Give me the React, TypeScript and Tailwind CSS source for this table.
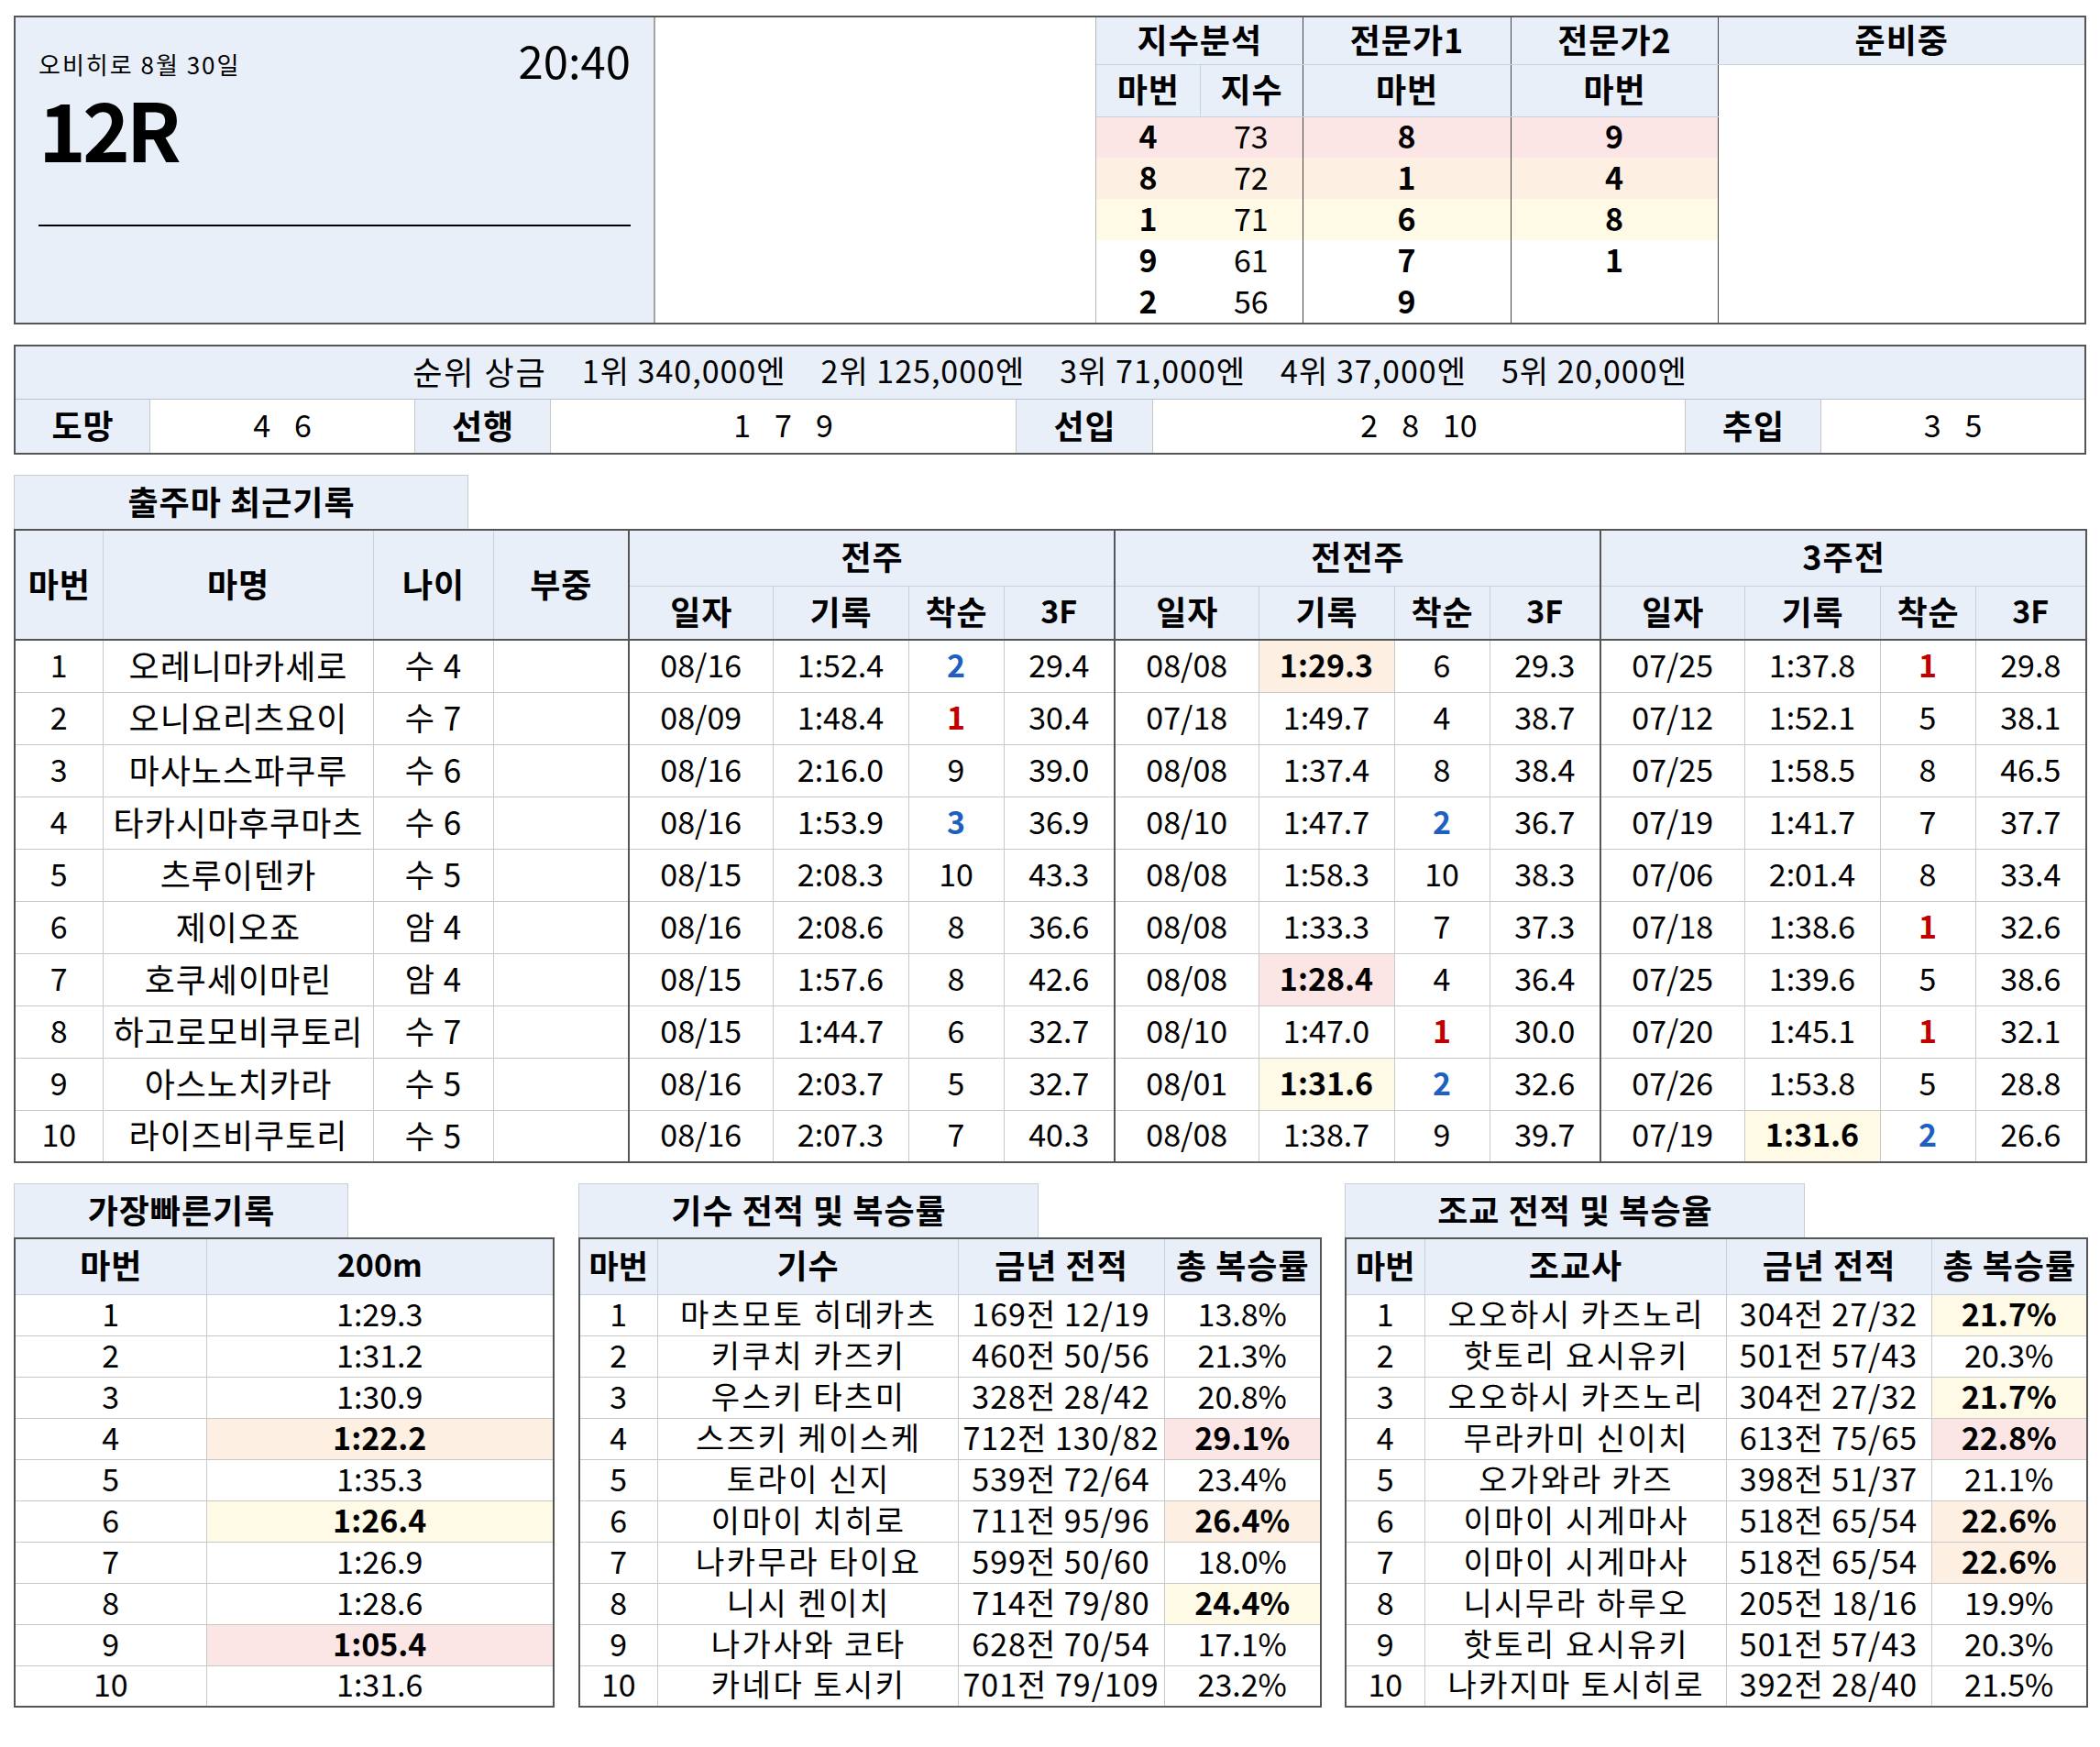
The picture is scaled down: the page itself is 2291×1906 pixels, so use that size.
import React from "react";

type HL = "" | "p" | "o" | "y";
type G = [string, string, string, string, HL?];

const hlCls: Record<string, string> = {
  "": "",
  p: "bg-[#fce5e5] font-bold",
  o: "bg-[#fdf0e2] font-bold",
  y: "bg-[#fefae6] font-bold",
};

const rankCls = (r: string) =>
  r === "1" ? "text-[#c00000] font-bold" : r === "2" || r === "3" ? "text-[#1f5fbf] font-bold" : "";

const horses: { no: string; name: string; age: string; g: G[] }[] = [
  { no: "1", name: "오레니마카세로", age: "수 4", g: [["08/16", "1:52.4", "2", "29.4"], ["08/08", "1:29.3", "6", "29.3", "o"], ["07/25", "1:37.8", "1", "29.8"]] },
  { no: "2", name: "오니요리츠요이", age: "수 7", g: [["08/09", "1:48.4", "1", "30.4"], ["07/18", "1:49.7", "4", "38.7"], ["07/12", "1:52.1", "5", "38.1"]] },
  { no: "3", name: "마사노스파쿠루", age: "수 6", g: [["08/16", "2:16.0", "9", "39.0"], ["08/08", "1:37.4", "8", "38.4"], ["07/25", "1:58.5", "8", "46.5"]] },
  { no: "4", name: "타카시마후쿠마츠", age: "수 6", g: [["08/16", "1:53.9", "3", "36.9"], ["08/10", "1:47.7", "2", "36.7"], ["07/19", "1:41.7", "7", "37.7"]] },
  { no: "5", name: "츠루이텐카", age: "수 5", g: [["08/15", "2:08.3", "10", "43.3"], ["08/08", "1:58.3", "10", "38.3"], ["07/06", "2:01.4", "8", "33.4"]] },
  { no: "6", name: "제이오죠", age: "암 4", g: [["08/16", "2:08.6", "8", "36.6"], ["08/08", "1:33.3", "7", "37.3"], ["07/18", "1:38.6", "1", "32.6"]] },
  { no: "7", name: "호쿠세이마린", age: "암 4", g: [["08/15", "1:57.6", "8", "42.6"], ["08/08", "1:28.4", "4", "36.4", "p"], ["07/25", "1:39.6", "5", "38.6"]] },
  { no: "8", name: "하고로모비쿠토리", age: "수 7", g: [["08/15", "1:44.7", "6", "32.7"], ["08/10", "1:47.0", "1", "30.0"], ["07/20", "1:45.1", "1", "32.1"]] },
  { no: "9", name: "아스노치카라", age: "수 5", g: [["08/16", "2:03.7", "5", "32.7"], ["08/01", "1:31.6", "2", "32.6", "y"], ["07/26", "1:53.8", "5", "28.8"]] },
  { no: "10", name: "라이즈비쿠토리", age: "수 5", g: [["08/16", "2:07.3", "7", "40.3"], ["08/08", "1:38.7", "9", "39.7"], ["07/19", "1:31.6", "2", "26.6", "y"]] },
];

const fastest: [string, HL][] = [
  ["1:29.3", ""], ["1:31.2", ""], ["1:30.9", ""], ["1:22.2", "o"], ["1:35.3", ""],
  ["1:26.4", "y"], ["1:26.9", ""], ["1:28.6", ""], ["1:05.4", "p"], ["1:31.6", ""],
];

const jockeys: [string, string, string, HL][] = [
  ["마츠모토 히데카츠", "169전 12/19", "13.8%", ""],
  ["키쿠치 카즈키", "460전 50/56", "21.3%", ""],
  ["우스키 타츠미", "328전 28/42", "20.8%", ""],
  ["스즈키 케이스케", "712전 130/82", "29.1%", "p"],
  ["토라이 신지", "539전 72/64", "23.4%", ""],
  ["이마이 치히로", "711전 95/96", "26.4%", "o"],
  ["나카무라 타이요", "599전 50/60", "18.0%", ""],
  ["니시 켄이치", "714전 79/80", "24.4%", "y"],
  ["나가사와 코타", "628전 70/54", "17.1%", ""],
  ["카네다 토시키", "701전 79/109", "23.2%", ""],
];

const trainers: [string, string, string, HL][] = [
  ["오오하시 카즈노리", "304전 27/32", "21.7%", "y"],
  ["핫토리 요시유키", "501전 57/43", "20.3%", ""],
  ["오오하시 카즈노리", "304전 27/32", "21.7%", "y"],
  ["무라카미 신이치", "613전 75/65", "22.8%", "p"],
  ["오가와라 카즈", "398전 51/37", "21.1%", ""],
  ["이마이 시게마사", "518전 65/54", "22.6%", "o"],
  ["이마이 시게마사", "518전 65/54", "22.6%", "o"],
  ["니시무라 하루오", "205전 18/16", "19.9%", ""],
  ["핫토리 요시유키", "501전 57/43", "20.3%", ""],
  ["나카지마 토시히로", "392전 28/40", "21.5%", ""],
];

const KO = " text-[36px] tracking-[1px] indent-[1px]";
const KOS = " text-[34px] tracking-[2.5px] indent-[2.5px]";
const NUM = " text-[34px]";
const MIX = " text-[34px] tracking-[1px]";
const TH = "border border-[#c5d2e3] bg-[#e9eff8] font-bold leading-none p-0 pb-[5px] text-center whitespace-nowrap";
const TD = "border border-[#c8c8c8] leading-none p-0 pb-[4px] text-center whitespace-nowrap";
const DARKL = " border-l-2 border-l-[#555]";
const TOPH = "bg-[#e9eff8] border-b border-b-[#c5d2e3] text-center font-bold text-[36px] leading-none p-0 pb-[5px] tracking-[1px] indent-[1px]";
const TOPD = "text-center text-[34px] leading-none p-0 pb-[4px]";

function Tab({ w, title }: { w: string; title: string }) {
  return (
    <div className={`${w} h-[59px] border border-b-0 border-[#c8ccd3] bg-[#e9eff8] flex items-center justify-center pb-[4px] pl-[1px] font-bold text-[36px] leading-none tracking-[1px]`}>
      {title}
    </div>
  );
}

function Nums({ vals }: { vals: string[] }) {
  return (
    <div className="flex items-center justify-center gap-[26px] text-[34px] leading-none pb-[4px]">
      {vals.map((v, i) => (
        <span key={i}>{v}</span>
      ))}
    </div>
  );
}

const LBL = "shrink-0 bg-[#e9eff8] border-r border-r-[#c8c8c8] flex items-center justify-center pb-[4px] pl-[1px] font-bold text-[36px] leading-none tracking-[1px]";

export default function App() {
  const top: [string, string, string, string][] = [
    ["4", "73", "8", "9"],
    ["8", "72", "1", "4"],
    ["1", "71", "6", "8"],
    ["9", "61", "7", "1"],
    ["2", "56", "9", ""],
  ];
  const topBg = ["bg-[#fce5e5]", "bg-[#fdf0e2]", "bg-[#fefae6]", "", ""];

  return (
    <div className="bg-white w-[2291px] min-h-[1906px] pl-[15px] pt-[17px] text-black font-['Noto_Sans_CJK_KR','Noto_Sans',sans-serif]">
      {/* Top box */}
      <div className="flex w-[2261px] h-[337px] border-2 border-[#555]">
        <div className="w-[698px] shrink-0 border-r-2 border-r-[#a3a3a3] bg-[#e9eff8] px-[25px] pt-[21px] flex flex-col">
          <div className="flex justify-between items-start">
            <span className="mt-[17px] text-[26px] leading-none tracking-[2px]">오비히로 8월 30일</span>
            <span className="text-[49px] leading-none">20:40</span>
          </div>
          <div className="mt-[6px] text-[88px] font-bold leading-none tracking-[-4px]">12R</div>
          <div className="mt-[62px] h-[2px] bg-black" />
        </div>
        <div className="w-[481px] shrink-0 border-r border-r-[#b5b5b5] bg-white" />
        <table className="table-fixed border-collapse w-[1078px] h-full">
          <colgroup>
            <col className="w-[113px]" />
            <col className="w-[112px]" />
            <col className="w-[227px]" />
            <col className="w-[226px]" />
            <col className="w-[400px]" />
          </colgroup>
          <tbody>
            <tr className="h-[51px]">
              <td colSpan={2} className={TOPH + " border-r border-r-[#444]"}>지수분석</td>
              <td className={TOPH + " border-r border-r-[#444]"}>전문가1</td>
              <td className={TOPH + " border-r border-r-[#444]"}>전문가2</td>
              <td className={TOPH}>준비중</td>
            </tr>
            <tr className="h-[57px]">
              <td className={TOPH + " border-r border-r-[#c5d2e3]"}>마번</td>
              <td className={TOPH + " border-r border-r-[#444]"}>지수</td>
              <td className={TOPH + " border-r border-r-[#444]"}>마번</td>
              <td className={TOPH + " border-r border-r-[#444]"}>마번</td>
              <td rowSpan={6} className="bg-white p-0" />
            </tr>
            {top.map((r, i) => (
              <tr key={i} className={`h-[45px] ${topBg[i]}`}>
                <td className={TOPD + " font-bold"}>{r[0]}</td>
                <td className={TOPD + " border-r border-r-[#444]"}>{r[1]}</td>
                <td className={TOPD + " font-bold border-r border-r-[#444]"}>{r[2]}</td>
                <td className={TOPD + " font-bold border-r border-r-[#444]"}>{r[3]}</td>
              </tr>
            ))}
          </tbody>
        </table>
      </div>

      {/* Prize / style box */}
      <div className="mt-[22px] w-[2261px] border-2 border-[#555]">
        <div className="h-[58px] bg-[#e9eff8] border-b border-b-[#b9c3cf] flex items-center justify-center gap-[38px] pb-[5px] text-[34px] leading-none">
          <span className="text-[35px] tracking-[2px]">순위 상금</span>
          <span className="tracking-[1px]">1위 340,000엔</span>
          <span className="tracking-[1px]">2위 125,000엔</span>
          <span className="tracking-[1px]">3위 71,000엔</span>
          <span className="tracking-[1px]">4위 37,000엔</span>
          <span className="tracking-[1px]">5위 20,000엔</span>
        </div>
        <div className="h-[58px] flex">
          <div className={LBL + " w-[147px]"}>도망</div>
          <div className="w-[289px] shrink-0 border-r border-r-[#c8c8c8] flex items-center justify-center"><Nums vals={["4", "6"]} /></div>
          <div className={LBL + " w-[148px]"}>선행</div>
          <div className="w-[508px] shrink-0 border-r border-r-[#c8c8c8] flex items-center justify-center"><Nums vals={["1", "7", "9"]} /></div>
          <div className={LBL + " w-[149px]"}>선입</div>
          <div className="w-[581px] shrink-0 border-r border-r-[#c8c8c8] flex items-center justify-center"><Nums vals={["2", "8", "10"]} /></div>
          <div className={LBL + " w-[148px]"}>추입</div>
          <div className="flex-1 flex items-center justify-center"><Nums vals={["3", "5"]} /></div>
        </div>
      </div>

      {/* Recent records */}
      <div className="mt-[22px]">
        <Tab w="w-[496px]" title="출주마 최근기록" />
        <table className="table-fixed border-collapse w-[2261px] border-2 border-[#555]">
          <colgroup>
            <col className="w-[96px]" />
            <col className="w-[295px]" />
            <col className="w-[131px]" />
            <col className="w-[148px]" />
            {[0, 1, 2].map((g) => (
              <React.Fragment key={g}>
                <col className="w-[157px]" />
                <col className="w-[148px]" />
                <col className="w-[104px]" />
                <col className="w-[121px]" />
              </React.Fragment>
            ))}
          </colgroup>
          <thead>
            <tr className="h-[61px]">
              <th rowSpan={2} className={TH + KO + " border-b-2 border-b-[#555]"}>마번</th>
              <th rowSpan={2} className={TH + KO + " border-b-2 border-b-[#555]"}>마명</th>
              <th rowSpan={2} className={TH + KO + " border-b-2 border-b-[#555]"}>나이</th>
              <th rowSpan={2} className={TH + KO + " border-b-2 border-b-[#555]"}>부중</th>
              {["전주", "전전주", "3주전"].map((t) => (
                <th key={t} colSpan={4} className={TH + KO + DARKL}>{t}</th>
              ))}
            </tr>
            <tr className="h-[59px]">
              {[0, 1, 2].map((g) => (
                <React.Fragment key={g}>
                  <th className={TH + KO + DARKL + " border-b-2 border-b-[#555]"}>일자</th>
                  <th className={TH + KO + " border-b-2 border-b-[#555]"}>기록</th>
                  <th className={TH + KO + " border-b-2 border-b-[#555]"}>착순</th>
                  <th className={TH + NUM + " border-b-2 border-b-[#555]"}>3F</th>
                </React.Fragment>
              ))}
            </tr>
          </thead>
          <tbody>
            {horses.map((h) => (
              <tr key={h.no} className="h-[57px]">
                <td className={TD + NUM}>{h.no}</td>
                <td className={TD + KO}>{h.name}</td>
                <td className={TD + " text-[35px] tracking-[1px] indent-[1px]"}>{h.age}</td>
                <td className={TD}></td>
                {h.g.map((g, gi) => (
                  <React.Fragment key={gi}>
                    <td className={TD + NUM + DARKL}>{g[0]}</td>
                    <td className={TD + NUM + " " + hlCls[g[4] || ""]}>{g[1]}</td>
                    <td className={TD + NUM + " " + rankCls(g[2])}>{g[2]}</td>
                    <td className={TD + NUM}>{g[3]}</td>
                  </React.Fragment>
                ))}
              </tr>
            ))}
          </tbody>
        </table>
      </div>

      {/* Bottom tables */}
      <div className="mt-[22px] flex items-start">
        <div className="w-[588px] shrink-0">
          <Tab w="w-[365px]" title="가장빠른기록" />
          <table className="table-fixed border-collapse w-[588px] border-2 border-[#555]">
            <colgroup>
              <col className="w-[209px]" />
              <col className="w-[379px]" />
            </colgroup>
            <thead>
              <tr className="h-[61px]">
                <th className={TH + KO}>마번</th>
                <th className={TH + NUM}>200m</th>
              </tr>
            </thead>
            <tbody>
              {fastest.map((f, i) => (
                <tr key={i} className="h-[45px]">
                  <td className={TD + NUM}>{i + 1}</td>
                  <td className={TD + NUM + " " + hlCls[f[1]]}>{f[0]}</td>
                </tr>
              ))}
            </tbody>
          </table>
        </div>

        <div className="ml-[28px] w-[809px] shrink-0">
          <Tab w="w-[502px]" title="기수 전적 및 복승률" />
          <table className="table-fixed border-collapse w-[809px] border-2 border-[#555]">
            <colgroup>
              <col className="w-[85px]" />
              <col className="w-[328px]" />
              <col className="w-[225px]" />
              <col className="w-[171px]" />
            </colgroup>
            <thead>
              <tr className="h-[61px]">
                <th className={TH + " text-[35px]"}>마번</th>
                <th className={TH + KO}>기수</th>
                <th className={TH + KO}>금년 전적</th>
                <th className={TH + KO}>총 복승률</th>
              </tr>
            </thead>
            <tbody>
              {jockeys.map((j, i) => (
                <tr key={i} className="h-[45px]">
                  <td className={TD + NUM}>{i + 1}</td>
                  <td className={TD + KOS}>{j[0]}</td>
                  <td className={TD + (j[1].length > 11 ? NUM : MIX)}>{j[1]}</td>
                  <td className={TD + NUM + " " + hlCls[j[3]]}>{j[2]}</td>
                </tr>
              ))}
            </tbody>
          </table>
        </div>

        <div className="ml-[27px] w-[809px] shrink-0">
          <Tab w="w-[502px]" title="조교 전적 및 복승율" />
          <table className="table-fixed border-collapse w-[809px] border-2 border-[#555]">
            <colgroup>
              <col className="w-[86px]" />
              <col className="w-[329px]" />
              <col className="w-[224px]" />
              <col className="w-[170px]" />
            </colgroup>
            <thead>
              <tr className="h-[61px]">
                <th className={TH + " text-[35px]"}>마번</th>
                <th className={TH + KO}>조교사</th>
                <th className={TH + KO}>금년 전적</th>
                <th className={TH + KO}>총 복승률</th>
              </tr>
            </thead>
            <tbody>
              {trainers.map((t, i) => (
                <tr key={i} className="h-[45px]">
                  <td className={TD + NUM}>{i + 1}</td>
                  <td className={TD + KOS}>{t[0]}</td>
                  <td className={TD + MIX}>{t[1]}</td>
                  <td className={TD + NUM + " " + hlCls[t[3]]}>{t[2]}</td>
                </tr>
              ))}
            </tbody>
          </table>
        </div>
      </div>
    </div>
  );
}
